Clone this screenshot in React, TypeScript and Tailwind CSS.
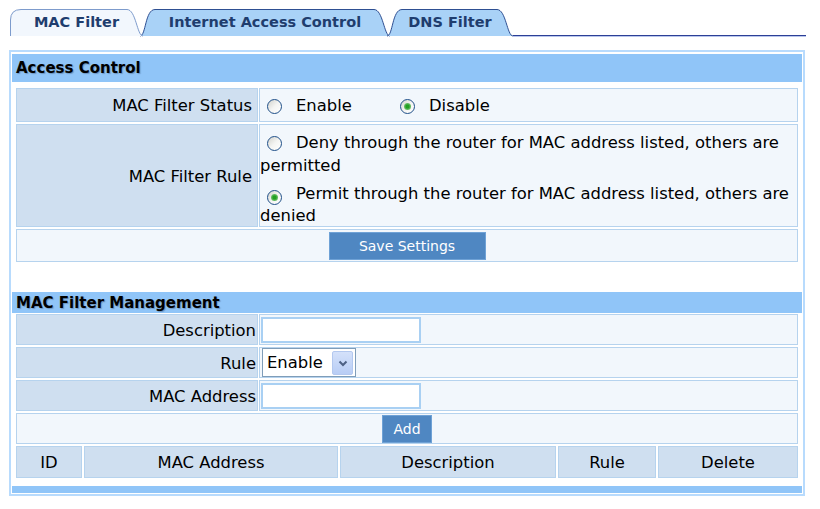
import clsx from "clsx";

// Tab shape drawn in svg behind the label
const Tab = ({
  label,
  width,
  widthClass,
  active,
  first,
}: {
  label: string;
  width: number;
  widthClass: string;
  active?: boolean;
  first?: boolean;
}) => {
  const h = 27;
  const d = first
    ? `M0.5 ${h} V11 Q0.5 0.5 11 0.5 H${width - 16} C${width - 7} 0.5 ${width - 6} ${h} ${width} ${h}`
    : `M0 ${h} C6 ${h} 5 0.5 15 0.5 H${width - 16} C${width - 7} 0.5 ${width - 6} ${h} ${width} ${h}`;

  return (
    <div
      className={clsx(
        "relative flex h-[27px] shrink-0 items-center justify-center",
        widthClass,
        !first && "-ml-[3px]",
        active && "z-10"
      )}
    >
      <svg
        className="absolute inset-0 h-full w-full overflow-visible"
        viewBox={`0 0 ${width} ${h}`}
      >
        <path
          d={d}
          fill={active ? "#f2f7fd" : "#a9d2f7"}
          stroke={active ? "#7d9bcc" : "#2e4f92"}
          strokeWidth="1"
        />
      </svg>
      <span className="relative pt-px text-[14.5px] font-bold text-[#1f3d6e]">{label}</span>
    </div>
  );
};

const Radio = ({ checked }: { checked?: boolean }) => (
  <span className="inline-flex h-[15px] w-[15px] items-center justify-center rounded-full border border-[#1f4f88] bg-linear-to-br from-[#d2d2cc] via-[#f4f4f2] to-white align-[-2px]">
    {checked && (
      <span className="h-[7px] w-[7px] rounded-full bg-radial from-[#22a022] from-30% to-[#9ad89a]" />
    )}
  </span>
);

const Label = ({ children, pad }: { children: React.ReactNode; pad: string }) => (
  <div
    className={clsx(
      "flex w-[242px] shrink-0 items-center justify-end border border-[#b6d3ee] bg-[#cfdff0] pt-[3px]",
      pad
    )}
  >
    {children}
  </div>
);

const Value = ({ children, className }: { children?: React.ReactNode; className?: string }) => (
  <div className={clsx("flex flex-1 items-center border border-[#b6d3ee] bg-[#f2f7fc]", className)}>
    {children}
  </div>
);

const TextInput = () => (
  <div className="ml-px h-[26px] w-[160px] border-2 border-[#a9d0f3] bg-white" />
);

const BlueButton = ({ label, widthClass }: { label: string; widthClass: string }) => (
  <div
    className={clsx(
      "flex h-[28px] items-center justify-center border border-[#6fa2d6] bg-[#4f87c2] pt-px text-[14px] text-white",
      widthClass
    )}
  >
    {label}
  </div>
);

const SectionHeader = ({ title, heightClass }: { title: string; heightClass: string }) => (
  <div
    className={clsx(
      "flex items-center bg-[#90c5f8] pl-[4px] pt-px text-[15px] font-bold text-black [text-shadow:1px_1px_1px_rgba(40,60,90,0.35)]",
      heightClass
    )}
  >
    {title}
  </div>
);

export default function App() {
  return (
    <div className="h-[509px] w-[820px] bg-white pt-[9px] font-['DejaVu_Sans',sans-serif] text-[16.4px] text-black">
      {/* Tabs */}
      <div className="ml-[10px] flex h-[28px] w-[796px] items-start">
        <Tab label="MAC Filter" width={133} widthClass="w-[133px]" active first />
        <Tab label="Internet Access Control" width={250} widthClass="w-[250px]" />
        <Tab label="DNS Filter" width={126} widthClass="w-[126px]" />
        <div className="h-[28px] flex-1 border-b border-b-[#b9c6ec]">
          <div className="h-[27px] border-b border-b-[#2c3f96]" />
        </div>
      </div>

      {/* Main panel */}
      <div className="ml-[9px] mt-[13px] w-[796px] border-2 border-[#b8dbfd] px-px pb-px pt-[2px]">
        <SectionHeader title="Access Control" heightClass="h-[28px]" />

        <div className="mx-[4px] mt-[6px] flex flex-col gap-[2px]">
          <div className="flex h-[34px] gap-[1px]">
            <Label pad="pr-[5px]">MAC Filter Status</Label>
            <Value className="pl-[7px] pt-[3px]">
              <div className="flex w-[133px] items-center">
                <Radio />
                <span className="ml-[14px]">Enable</span>
              </div>
              <Radio checked />
              <span className="ml-[14px]">Disable</span>
            </Value>
          </div>

          <div className="flex h-[103px] gap-[1px]">
            <Label pad="pr-[5px]">MAC Filter Rule</Label>
            <div className="flex-1 border border-[#b6d3ee] bg-[#f2f7fc] pt-[7px] leading-[22px]">
              <div>
                <span className="ml-[7px] mr-[14px] inline-block align-middle">
                  <Radio />
                </span>
                Deny through the router for MAC address listed, others are permitted
              </div>
              <div className="mt-[6px]">
                <span className="ml-[7px] mr-[14px] inline-block align-middle">
                  <Radio checked />
                </span>
                Permit through the router for MAC address listed, others are denied
              </div>
            </div>
          </div>

          <div className="flex h-[33px] items-center justify-center border border-[#b6d3ee] bg-[#f2f7fc]">
            <BlueButton label="Save Settings" widthClass="w-[157px]" />
          </div>
        </div>

        <div className="mt-[30px]">
          <SectionHeader title="MAC Filter Management" heightClass="h-[21px]" />
        </div>

        <div className="mx-[4px] mt-px flex flex-col gap-[2px]">
          <div className="flex h-[31px] gap-[1px]">
            <Label pad="pr-[1px]">Description</Label>
            <Value>
              <TextInput />
            </Value>
          </div>
          <div className="flex h-[31px] gap-[1px]">
            <Label pad="pr-[1px]">Rule</Label>
            <Value>
              <div className="ml-[2px] flex h-[29px] w-[94px] items-center border border-[#7f9db9] bg-white pl-[4px] pt-px">
                <span>Enable</span>
                <span className="ml-auto mr-[2px] flex h-[24px] w-[21px] items-center justify-center rounded-[2px] border border-[#b3c8ef] bg-linear-to-b from-[#d4e1fa] to-[#b8cdf5]">
                  <svg width="10" height="7" viewBox="0 0 10 7">
                    <path d="M1.5 1.5 L5 5 L8.5 1.5" fill="none" stroke="#4d6185" strokeWidth="2" />
                  </svg>
                </span>
              </div>
            </Value>
          </div>
          <div className="flex h-[31px] gap-[1px]">
            <Label pad="pr-[1px]">MAC Address</Label>
            <Value>
              <TextInput />
            </Value>
          </div>
          <div className="flex h-[31px] items-center justify-center border border-[#b6d3ee] bg-[#f2f7fc]">
            <BlueButton label="Add" widthClass="w-[50px]" />
          </div>
          <div className="flex h-[32px] gap-[2px] text-center">
            {[
              { label: "ID", w: "w-[66px]" },
              { label: "MAC Address", w: "w-[254px]" },
              { label: "Description", w: "w-[216px]" },
              { label: "Rule", w: "w-[98px]" },
              { label: "Delete", w: "flex-1" },
            ].map((col) => (
              <div
                key={col.label}
                className={clsx(
                  "flex items-center justify-center border border-[#b6d3ee] bg-[#cfdff0] pt-[3px]",
                  col.w
                )}
              >
                {col.label}
              </div>
            ))}
          </div>
        </div>

        <div className="mt-[8px] h-[7px] bg-[#90c5f8]" />
      </div>
    </div>
  );
}
